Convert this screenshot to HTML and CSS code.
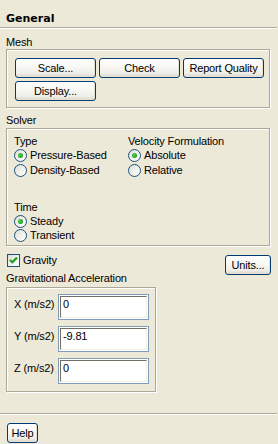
FILE: index.html
```html
<!DOCTYPE html>
<html>
<head>
<meta charset="utf-8">
<link rel="stylesheet" href="styles.css">
</head>
<body>
<div class="panel">
  <div class="title">General</div>
  <div class="sep"></div>
  <div class="content">
    <div class="group-label">Mesh</div>
    <div class="box mesh">
      <button class="btn w81">Scale...</button>
      <button class="btn w81">Check</button>
      <button class="btn w81">Report Quality</button>
      <button class="btn w81">Display...</button>
    </div>

    <div class="group-label solver-label">Solver</div>
    <div class="box solver">
      <div class="solver-cols">
        <div class="col">
          <div class="sub-label">Type</div>
          <div class="opt"><span class="radio on"></span>Pressure-Based</div>
          <div class="opt"><span class="radio"></span>Density-Based</div>
        </div>
        <div class="col">
          <div class="sub-label">Velocity Formulation</div>
          <div class="opt"><span class="radio on"></span>Absolute</div>
          <div class="opt"><span class="radio"></span>Relative</div>
        </div>
      </div>
      <div class="time">
        <div class="sub-label">Time</div>
        <div class="opt tight"><span class="radio on"></span>Steady</div>
        <div class="opt tight"><span class="radio"></span>Transient</div>
      </div>
    </div>

    <div class="gravity-row">
      <div class="check-opt">
        <span class="checkbox"><svg width="11" height="11" viewBox="0 0 11 11"><path d="M2 5 L4.3 7.3 L9 2.6" fill="none" stroke="#21a121" stroke-width="2.2"/></svg></span>Gravity
      </div>
      <button class="btn units">Units...</button>
    </div>

    <div class="group-label grav-label">Gravitational Acceleration</div>
    <div class="box grav">
      <div class="field-row"><span class="field-label">X (m/s2)</span><span class="field"><span class="field-inner">0</span></span></div>
      <div class="field-row"><span class="field-label">Y (m/s2)</span><span class="field"><span class="field-inner">-9.81</span></span></div>
      <div class="field-row"><span class="field-label">Z (m/s2)</span><span class="field"><span class="field-inner">0</span></span></div>
    </div>
  </div>
  <div class="sep footer-sep"></div>
  <div class="footer">
    <button class="btn help">Help</button>
  </div>
</div>
</body>
</html>
```

FILE: styles.css
```css
html, body {
  margin: 0;
  padding: 0;
}
body {
  background: #ECE9D8;
  width: 278px;
  height: 444px;
  overflow: hidden;
  font-family: "Liberation Sans", Arial, sans-serif;
  font-size: 11px;
  line-height: 13px;
  color: #000;
  letter-spacing: -0.15px;
}
.panel {
  display: flex;
  flex-direction: column;
}
.title {
  font-family: "DejaVu Sans", sans-serif;
  font-weight: bold;
  font-size: 11px;
  line-height: 13px;
  letter-spacing: 0;
  padding: 12px 0 0 6px;
  height: 13px;
  margin-bottom: 2px;
}
.sep {
  height: 1px;
  background: #ACA899;
  border-bottom: 1px solid #fff;
  margin-right: 1px;
}
.content {
  padding: 0 8px 0 6px;
  display: flex;
  flex-direction: column;
}
.group-label {
  margin-top: 7px;
  height: 13px;
}
.solver-label {
  margin-top: 6px;
  margin-bottom: 1px;
}
.grav-label {
  margin-top: 0;
}
.box {
  box-sizing: border-box;
  border: 1px solid #ACA899;
  box-shadow: inset 1px 1px 0 #fff, 1px 1px 0 #fff;
}
.mesh {
  padding: 8px 6px 6px 8px;
  display: grid;
  grid-template-columns: 81px 81px 81px;
  column-gap: 3px;
  row-gap: 3px;
}
.btn {
  font-family: "Liberation Sans", Arial, sans-serif;
  font-size: 11px;
  letter-spacing: -0.15px;
  color: #000;
  height: 20px;
  padding: 0;
  margin: 0;
  border: 1px solid #003C74;
  border-radius: 3px;
  background: linear-gradient(180deg, #FFFFFF 0%, #F7F7F4 45%, #EEEDE7 80%, #D9D4C9 100%);
  box-shadow: inset -1px -1px 0 #E3E0D4;
  line-height: 17px;
  text-align: center;
}
.w81 { width: 81px; }

.solver {
  padding: 6px 6px 3px 7px;
}
.solver-cols {
  display: grid;
  grid-template-columns: 114px auto;
}
.sub-label {
  height: 13px;
}
.opt {
  display: flex;
  align-items: center;
  height: 15px;
  white-space: nowrap;
}
.opt.tight { height: 14px; }
.time {
  margin-top: 23px;
}
.radio {
  width: 11px;
  height: 11px;
  border: 1px solid #1C5180;
  border-radius: 50%;
  background: linear-gradient(135deg, #DCDCD7 0%, #F0F0EC 50%, #FFFFFF 100%);
  margin-right: 3px;
  flex: none;
  display: flex;
  align-items: center;
  justify-content: center;
}
.radio.on::after {
  content: "";
  width: 5px;
  height: 5px;
  border-radius: 50%;
  background: radial-gradient(circle at 40% 40%, #55D051 0%, #21A121 70%, #1A8A1A 100%);
}

.gravity-row {
  height: 26px;
  display: flex;
  justify-content: space-between;
  align-items: flex-start;
}
.check-opt {
  display: flex;
  align-items: center;
  margin-top: 8px;
  margin-left: 1px;
  height: 13px;
}
.checkbox {
  width: 11px;
  height: 11px;
  border: 1px solid #1C5180;
  background: linear-gradient(135deg, #DCDCD7 0%, #F0F0EC 50%, #FFFFFF 100%);
  margin-right: 3px;
  display: flex;
  align-items: center;
  justify-content: center;
}
.checkbox svg { display: block; }
.units {
  width: 46px;
  margin-top: 9px;
  margin-right: -1px;
}

.grav {
  margin-top: 2px;
  width: 150px;
  padding: 6px 0 7px 7px;
  display: flex;
  flex-direction: column;
  row-gap: 6px;
}
.field-row {
  display: flex;
  height: 26px;
}
.field-label {
  width: 44px;
  margin-top: 4px;
  white-space: nowrap;
}
.field {
  width: 89px;
  height: 24px;
  border: 1px solid #7F9DB9;
  background: #fff;
  display: flex;
}
.field-inner {
  flex: 1;
  border-top: 1px solid #716F64;
  border-left: 1px solid #716F64;
  border-right: 1px solid #F1EFE2;
  border-bottom: 1px solid #F1EFE2;
  margin: 1px;
  padding: 1px 2px;
}

.footer-sep {
  margin-top: 21px;
}
.footer {
  padding: 8px 0 0 7px;
}
.help {
  width: 31px;
}
```
